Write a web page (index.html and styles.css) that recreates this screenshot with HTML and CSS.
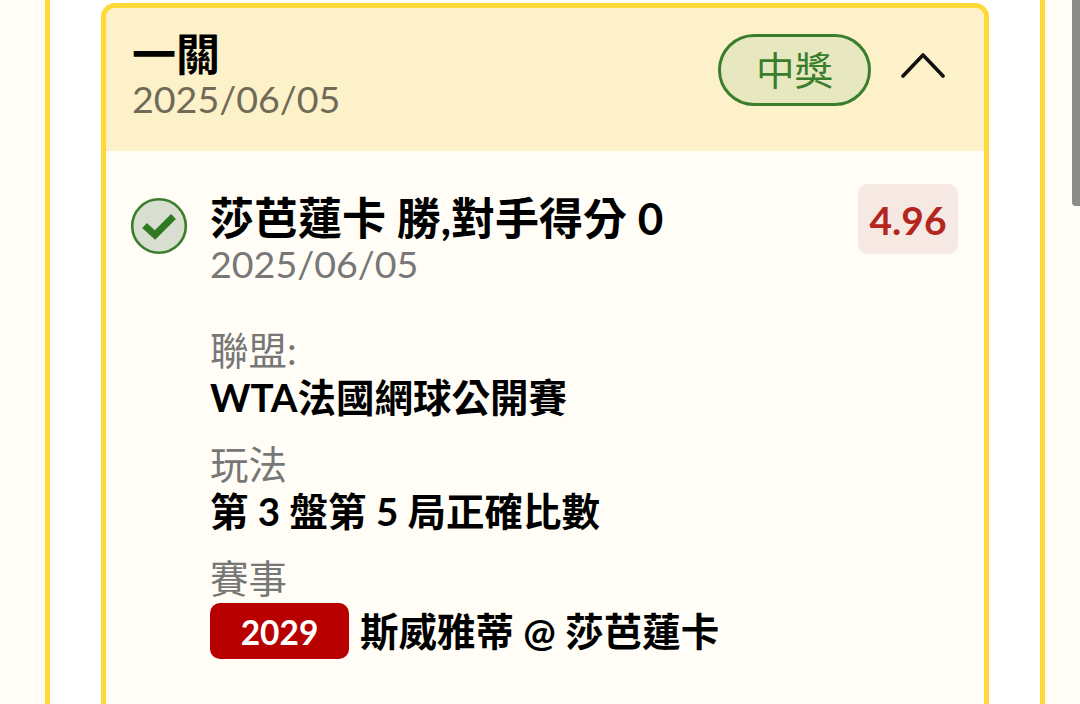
FILE: index.html
```html
<!DOCTYPE html>
<html lang="zh-Hant">

<head>
  <meta charset="utf-8">
  <meta name="viewport" content="width=device-width, initial-scale=1.0">
  <title>投注詳情</title>
  <link rel="stylesheet" href="styles.css">
</head>

<body>
  <div class="page">
    <div class="panel">
      <section class="card">
        <header class="card-head">
          <div class="head-text">
            <h1>一關</h1>
            <div class="head-date">2025/06/05</div>
          </div>
          <span class="status">中獎</span>
          <svg class="chevron" width="46" height="28" viewBox="0 0 46 28">
            <path d="M3 26 L23 5 L43 26" fill="none" stroke="#111" stroke-width="3.6" stroke-linecap="round" stroke-linejoin="round" />
          </svg>
        </header>
        <div class="card-body">
          <svg class="check" width="58" height="58" viewBox="0 0 58 58">
            <circle cx="29" cy="29" r="26.8" fill="#d9dfd0" stroke="#3a7d2c" stroke-width="2.6" />
            <path d="M14.5 28.5 L25 38 L43.5 19.5" fill="none" stroke="#2f7a22" stroke-width="7" />
          </svg>
          <div class="detail">
            <div class="pick-row">
              <div class="pick">
                <div class="pick-name">莎芭蓮卡 勝,對手得分 0</div>
                <div class="pick-date">2025/06/05</div>
              </div>
              <span class="odds">4.96</span>
            </div>
            <div class="info first">
              <div class="info-label">聯盟:</div>
              <div class="info-value">WTA法國網球公開賽</div>
            </div>
            <div class="info">
              <div class="info-label">玩法</div>
              <div class="info-value">第 3 盤第 5 局正確比數</div>
            </div>
            <div class="info">
              <div class="info-label">賽事</div>
              <div class="match">
                <span class="match-no">2029</span>
                <span class="info-value">斯威雅蒂 @ 莎芭蓮卡</span>
              </div>
            </div>
          </div>
        </div>
      </section>
    </div>
  </div>
  <div class="scrollbar"></div>
</body>

</html>
```

FILE: styles.css
```css
html,
body {
  margin: 0;
  padding: 0;
  height: 100%;
  overflow: hidden;
  font-family: "Lato", "Noto Sans CJK TC", sans-serif;
  background-color: #fffdf5;
  color: #000000;
}

.page {
  height: 704px;
  padding-left: 45px;
  box-sizing: border-box;
}

.panel {
  width: 1000px;
  height: 704px;
  box-sizing: border-box;
  padding: 3px 51px 0;
  background-color: #ffffff;
  border-left: 5px solid #ffd83a;
  border-right: 5px solid #ffd83a;
}

.card {
  height: 701px;
  box-sizing: border-box;
  border: 5px solid #ffd83a;
  border-bottom: 0;
  border-radius: 14px 14px 0 0;
  overflow: hidden;
  background-color: #fffdf5;
}

.card-head {
  display: flex;
  align-items: flex-start;
  height: 143px;
  box-sizing: border-box;
  padding: 23px 38px 0 26px;
  background-color: #fdf1c9;
}

.head-text {
  flex: 1;
}

h1 {
  margin: 0;
  font-size: 44px;
  line-height: 46px;
  font-weight: 700;
}

.head-date {
  font-size: 37.6px;
  line-height: 44px;
  color: #716a57;
}

.status {
  width: 153px;
  height: 72px;
  margin-top: 3px;
  box-sizing: border-box;
  border: 3px solid #3a7d2c;
  border-radius: 36px;
  background-color: #e8e8c0;
  color: #3a7d2c;
  font-size: 38.5px;
  font-weight: 400;
  line-height: 66px;
  text-align: center;
}

.chevron {
  margin: 19px 0 0 29px;
}

.card-body {
  display: flex;
  align-items: flex-start;
  padding: 33px 26px 0 24px;
}

.check {
  margin: 13px 22px 0 0;
  flex-shrink: 0;
}

.detail {
  flex: 1;
}

.pick-row {
  display: flex;
  justify-content: space-between;
  align-items: flex-start;
}

.pick-name {
  font-size: 44px;
  line-height: 46px;
  font-weight: 700;
  margin-top: 11px;
}

.pick-date {
  font-size: 37.6px;
  line-height: 46px;
  color: #777777;
}

.odds {
  width: 100px;
  height: 70px;
  border-radius: 10px;
  background-color: #f6e8e2;
  color: #b3261e;
  font-size: 39px;
  font-weight: 700;
  line-height: 72px;
  text-align: center;
}

.info {
  margin-top: 20px;
}

.info.first {
  margin-top: 39px;
}

.info-label {
  font-size: 38.5px;
  line-height: 48px;
  color: #777777;
}

.info-value {
  font-size: 38.5px;
  line-height: 46px;
  font-weight: 700;
}

.match {
  display: flex;
  align-items: center;
  gap: 11px;
  margin-top: 1px;
}

.match-no {
  width: 139px;
  height: 56px;
  border-radius: 10px;
  background-color: #b80000;
  color: #ffffff;
  font-size: 33.5px;
  font-weight: 700;
  line-height: 58px;
  text-align: center;
}

.scrollbar {
  position: absolute;
  top: 0;
  right: 0;
  width: 8px;
  height: 206px;
  border-radius: 0 0 0 4px;
  background-color: #8c8c88;
}
```
